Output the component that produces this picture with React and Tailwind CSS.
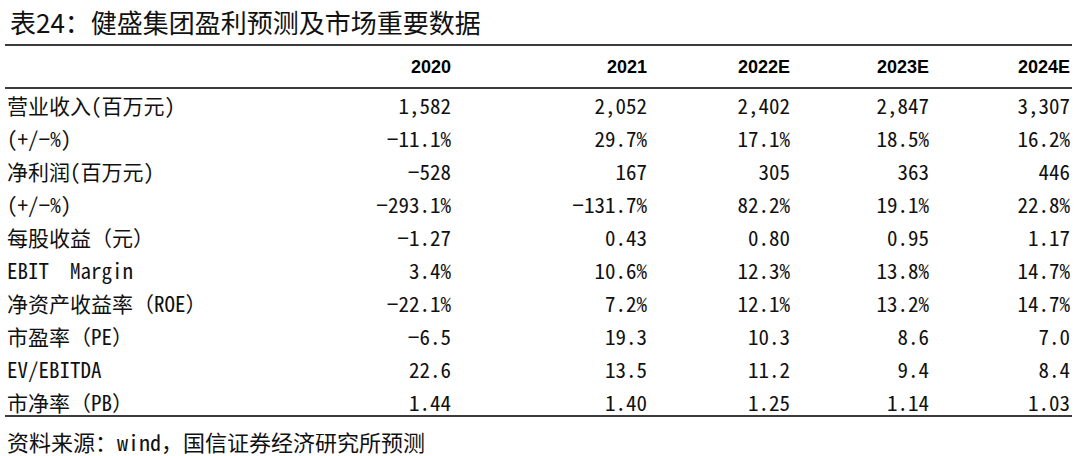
import React from "react";

const rows = [
  ["营业收入(百万元)", "1,582", "2,052", "2,402", "2,847", "3,307"],
  ["(+/−%)", "−11.1%", "29.7%", "17.1%", "18.5%", "16.2%"],
  ["净利润(百万元)", "−528", "167", "305", "363", "446"],
  ["(+/−%)", "−293.1%", "−131.7%", "82.2%", "19.1%", "22.8%"],
  ["每股收益（元）", "−1.27", "0.43", "0.80", "0.95", "1.17"],
  ["EBIT  Margin", "3.4%", "10.6%", "12.3%", "13.8%", "14.7%"],
  ["净资产收益率（ROE）", "−22.1%", "7.2%", "12.1%", "13.2%", "14.7%"],
  ["市盈率（PE）", "−6.5", "19.3", "10.3", "8.6", "7.0"],
  ["EV/EBITDA", "22.6", "13.5", "11.2", "9.4", "8.4"],
  ["市净率（PB）", "1.44", "1.40", "1.25", "1.14", "1.03"],
];

const years = ["2020", "2021", "2022E", "2023E", "2024E"];

const grid =
  "grid grid-cols-[295px_153px_196px_143px_139px_141px] items-center";

export default function App() {
  return (
    <div className="w-[1080px] h-[456px] bg-white text-[#111] overflow-hidden">
      <div className="h-[44px] pl-[10px] flex items-center font-['Noto_Sans_CJK_SC',sans-serif] text-[26px] leading-none">
        表24：健盛集团盈利预测及市场重要数据
      </div>
      <div className="ml-[5px] w-[1067px]">
        <div className="h-[2px] bg-[#3c3c3c]" />
        <div
          className={`${grid} h-[41px] font-['Liberation_Sans',Arial,sans-serif] font-bold text-[18px] text-black`}
        >
          <div />
          {years.map((y) => (
            <div key={y} className="text-right pr-[2px] pt-[1px]">
              {y}
            </div>
          ))}
        </div>
        <div className="h-[2px] bg-[#3c3c3c]" />
        <div className="font-['Noto_Sans_Mono_CJK_SC','Noto_Sans_CJK_SC',monospace] text-[21px] leading-none whitespace-pre">
          {rows.map((r, i) => (
            <div
              key={i}
              className={`${grid} ${i === rows.length - 1 ? "h-[29px] items-start pt-[6px]" : "h-[33px]"}`}
            >
              <div className="pl-[2px]">{r[0]}</div>
              {r.slice(1).map((v, j) => (
                <div key={j} className="text-right pr-[2px]">
                  {v}
                </div>
              ))}
            </div>
          ))}
        </div>
        <div className="h-[2px] bg-[#3c3c3c]" />
      </div>
      <div className="pl-[7px] pt-[13px] font-['Noto_Sans_Mono_CJK_SC','Noto_Sans_CJK_SC',monospace] text-[22px] leading-none whitespace-pre">
        资料来源：wind，国信证券经济研究所预测
      </div>
    </div>
  );
}
